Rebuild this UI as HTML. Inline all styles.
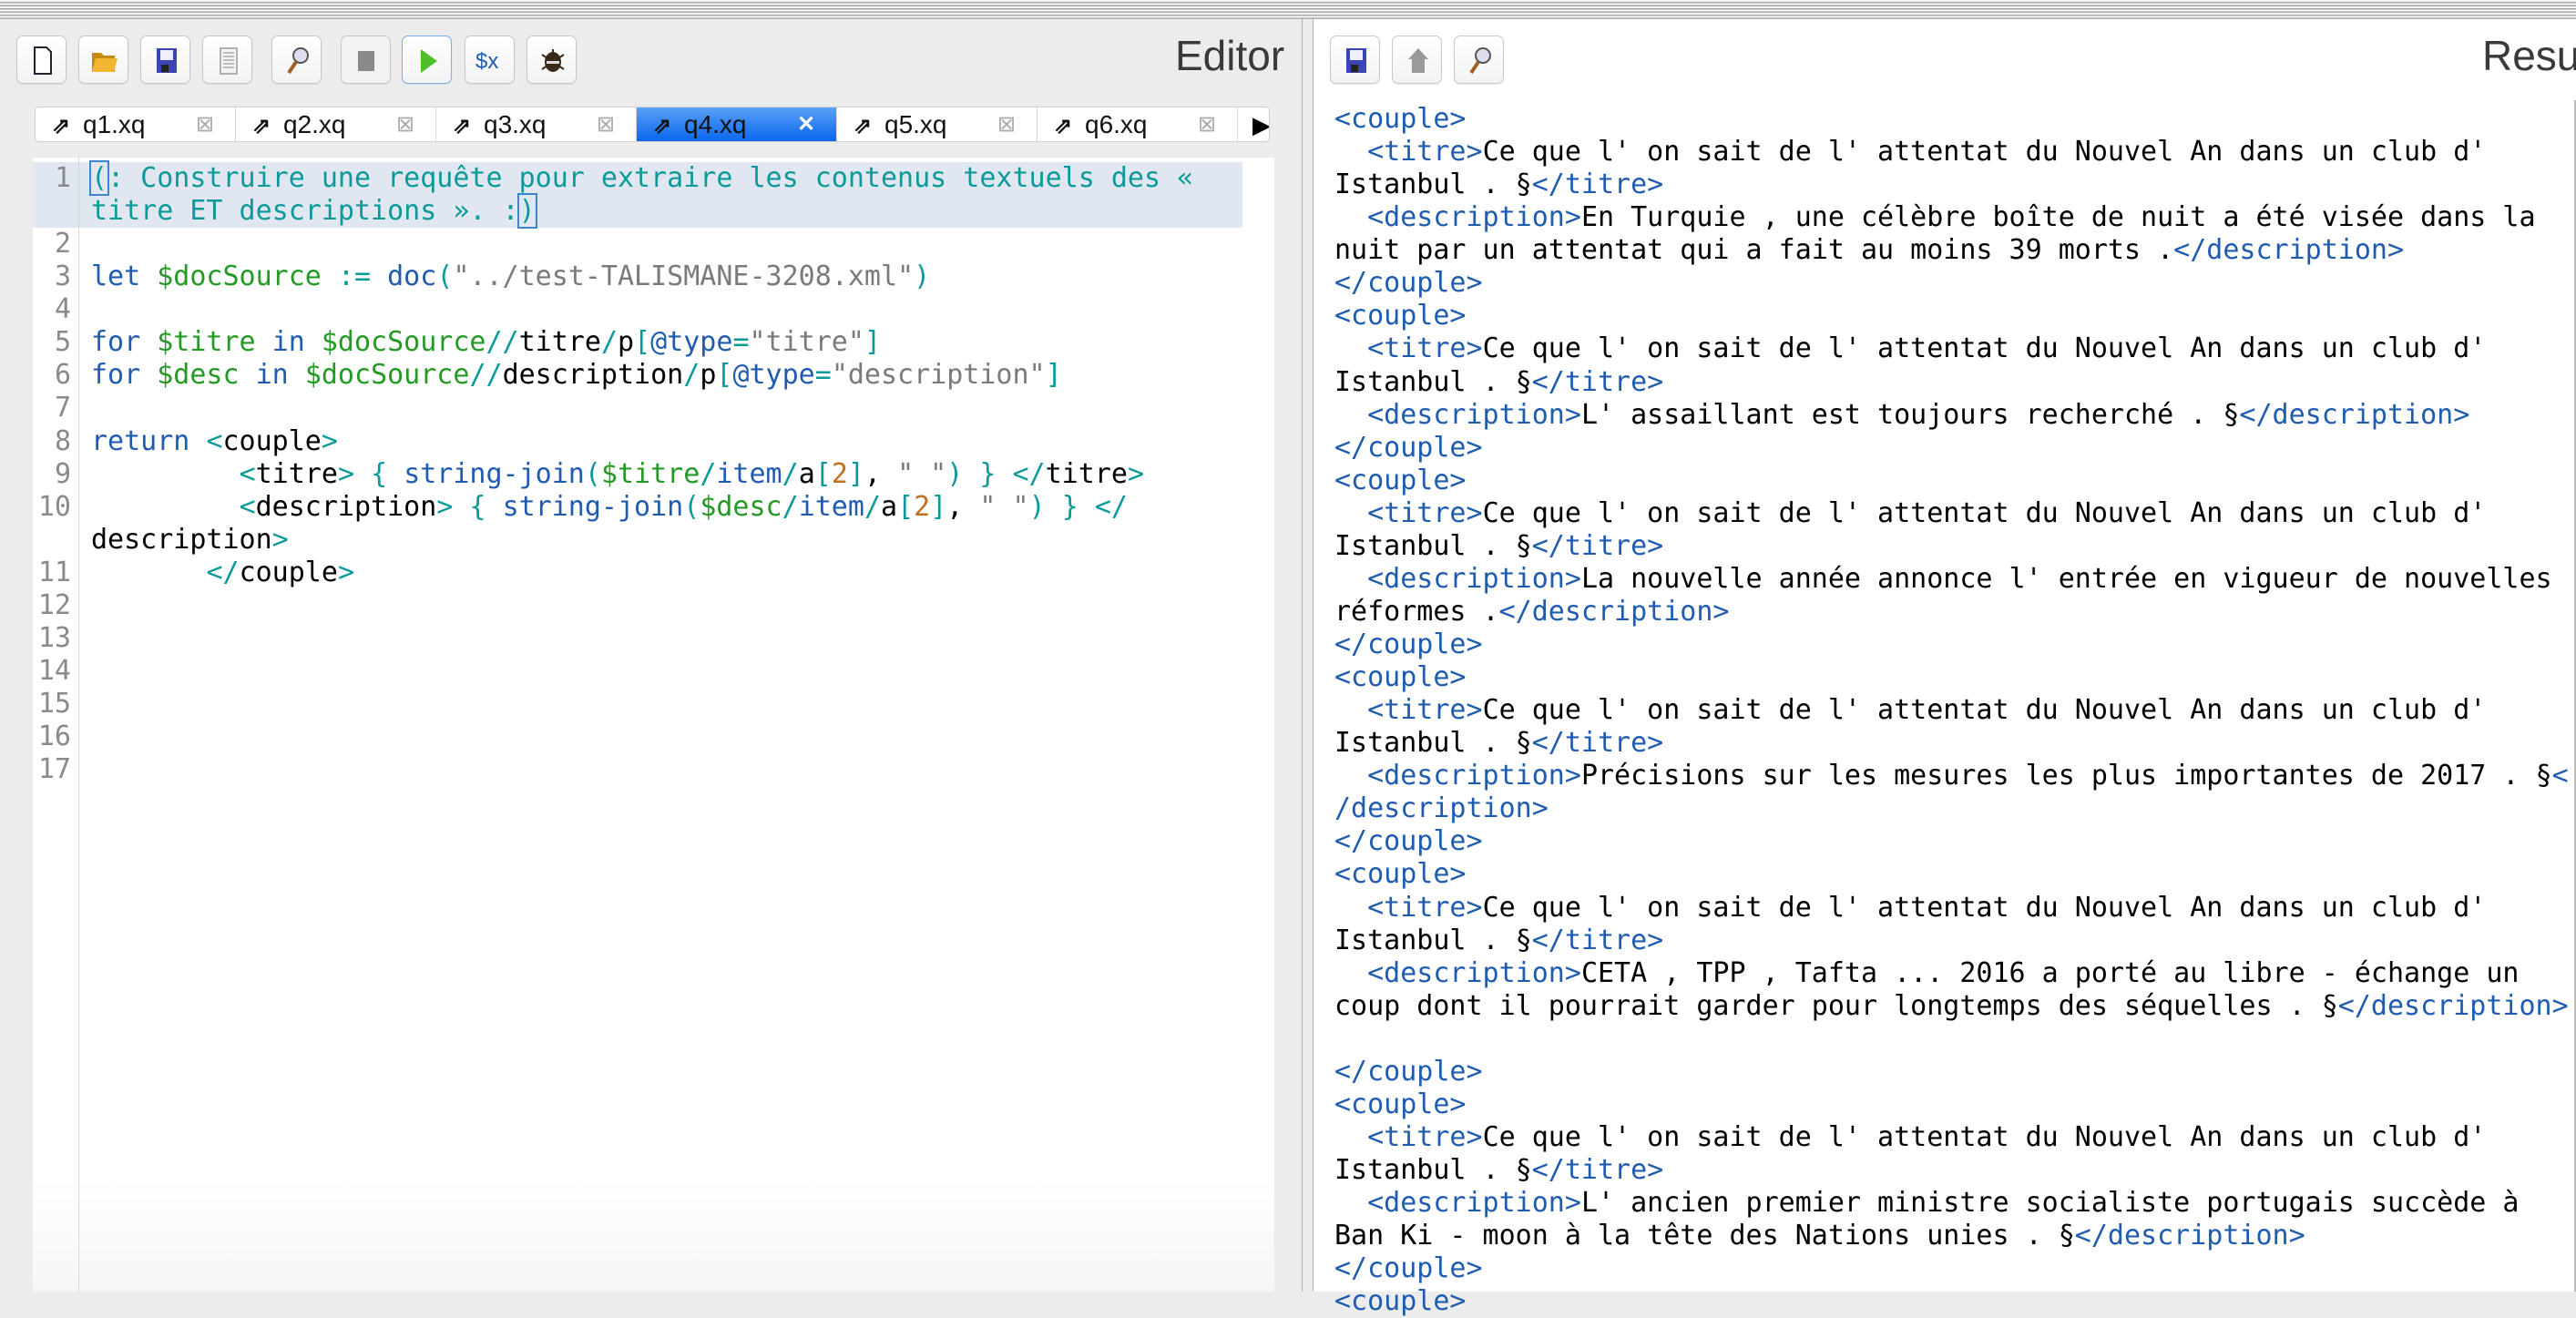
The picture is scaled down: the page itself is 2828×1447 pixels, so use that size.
<!DOCTYPE html>
<html><head><meta charset="utf-8"><style>
*{margin:0;padding:0;box-sizing:border-box}
body{width:2828px;height:1418px;overflow:hidden;background:#ececec;position:relative;font-family:"Liberation Sans",sans-serif}
.stripes{position:absolute;left:0;top:0;width:2828px;height:21px;background:repeating-linear-gradient(to bottom,#f4f4f4 0,#f4f4f4 2px,#a9a9a9 2px,#a9a9a9 3.5px)}
.btn{position:absolute;top:39px;width:55px;height:53px;border:1px solid #c8c8c8;border-radius:7px;background:linear-gradient(#fff,#f3f3f3);box-shadow:0 1px 1px rgba(0,0,0,.08)}
.btn svg{position:absolute;left:0;top:0}
.lbl{position:absolute;top:34px;font-size:46px;color:#3a3a3a}
.tabs{position:absolute;left:38px;top:117px;width:1356px;height:39px;background:#fff;border:1px solid #cfcfcf;border-radius:5px;display:flex;overflow:hidden}
.tab{width:220px;height:100%;border-right:1px solid #d8d8d8;position:relative;font-size:28px;color:#111}
.tab span.n{position:absolute;left:52px;top:3px}
.tab .ic{position:absolute;left:18px;top:6px;font-size:24px;font-weight:bold}
.tab .x{position:absolute;left:176px;top:4px;font-size:24px;color:#aaa}
.tab.on{background:linear-gradient(#5aa0f5,#0a66f0);color:#111}
.tab.on .x{color:#fff;font-weight:bold}
.editor{position:absolute;left:36px;top:173px;width:1363px;height:1245px;background:linear-gradient(#fff 90%,#f6f6f6)}
.gut{position:absolute;left:86px;top:173px;width:1px;height:1245px;background:#d6d6d6}
.hl{position:absolute;left:36px;top:178px;width:1328px;height:72px;background:#e1e7f0}
pre{font-family:"DejaVu Sans Mono",monospace;font-size:30px;line-height:36.07px;position:absolute;white-space:pre}
.nums{left:36px;top:178px;width:42px;text-align:right;color:#8a8a8a}
.code{left:100px;top:178px;color:#000}
.k{color:#1f5cb0}.v{color:#239a23}.t{color:#0a9a9a}.s{color:#7a7a7a}.o{color:#c0701e}
.res{left:1465px;top:113px;color:#000;font-size:30px}
.g{color:#1f5cb0}
.cur{outline:2px solid #3a86d0}
</style></head><body>
<div class="stripes"></div>
<div style="position:absolute;left:1429px;top:21px;width:1px;height:1397px;background:#b0b0b0"></div>
<div style="position:absolute;left:1441px;top:21px;width:1px;height:1397px;background:#b0b0b0"></div>
<div style="position:absolute;left:1442px;top:21px;width:1386px;height:1397px;background:#fff"></div>
<div style="position:absolute;left:2826px;top:110px;width:2px;height:1308px;background:#bbb"></div>

<div class="btn" style="left:18px"><svg width="55" height="53"><path d="M19 12h13l5 5v24H19z" fill="#fff" stroke="#223" stroke-width="2"/></svg></div>
<div class="btn" style="left:86px"><svg width="55" height="53"><path d="M14 18h10l3 3h12v18H14z" fill="#c98a12"/><path d="M18 24h24l-4 15H14z" fill="#f2b632"/></svg></div>
<div class="btn" style="left:154px"><svg width="55" height="53"><rect x="17" y="13" width="22" height="27" fill="#3c45b4"/><rect x="21" y="15" width="14" height="11" fill="#eef"/><rect x="22" y="31" width="8" height="8" fill="#222"/></svg></div>
<div class="btn" style="left:222px"><svg width="55" height="53"><rect x="19" y="13" width="18" height="28" fill="#f4f4f4" stroke="#999" stroke-width="1.5"/><path d="M22 18h12M22 22h12M22 26h12M22 30h12M22 34h12" stroke="#aaa" stroke-width="1.5"/></svg></div>
<div class="btn" style="left:298px"><svg width="55" height="53"><circle cx="31" cy="21" r="8" fill="#dde" stroke="#555" stroke-width="2"/><path d="M26 28l-8 12" stroke="#a0602a" stroke-width="4"/></svg></div>
<div class="btn" style="left:374px;background:#f2f2f2"><svg width="55" height="53"><rect x="18" y="16" width="18" height="22" fill="#8a8a8a"/></svg></div>
<div class="btn" style="left:441px;border-color:#7ab0e8"><svg width="55" height="53"><path d="M20 14l18 13-18 13z" fill="#4cbf2a"/></svg></div>
<div class="btn" style="left:510px"><svg width="55" height="53"><text x="11" y="35" font-family="Liberation Sans" font-size="24" fill="#1f5cb0">$x</text></svg></div>
<div class="btn" style="left:578px"><svg width="55" height="53"><ellipse cx="28" cy="28" rx="9" ry="11" fill="#3a2a1a"/><path d="M16 20l24 16M16 36l24-16M28 14v4" stroke="#3a2a1a" stroke-width="2"/><rect x="21" y="27" width="14" height="3" fill="#ddd"/></svg></div>
<div class="lbl" style="left:1290px">Editor</div>

<div class="tabs">
<div class="tab"><span class="ic">⇗</span><span class="n">q1.xq</span><span class="x">⊠</span></div>
<div class="tab"><span class="ic">⇗</span><span class="n">q2.xq</span><span class="x">⊠</span></div>
<div class="tab"><span class="ic">⇗</span><span class="n">q3.xq</span><span class="x">⊠</span></div>
<div class="tab on"><span class="ic">⇗</span><span class="n">q4.xq</span><span class="x">✕</span></div>
<div class="tab"><span class="ic">⇗</span><span class="n">q5.xq</span><span class="x">⊠</span></div>
<div class="tab"><span class="ic">⇗</span><span class="n">q6.xq</span><span class="x">⊠</span></div>
<div style="flex:1;position:relative;font-size:26px"><span style="position:absolute;left:16px;top:4px">▶</span></div>
</div>

<div class="editor"></div>
<div class="hl"></div>
<div class="gut"></div>
<pre class="nums">1

2
3
4
5
6
7
8
9
10

11
12
13
14
15
16
17</pre>
<pre class="code"><span class="t"><span class="cur">(</span>: Construire une requête pour extraire les contenus textuels des «
titre ET descriptions ». :<span class="cur">)</span></span>

<span class="k">let</span> <span class="v">$docSource</span> <span class="t">:=</span> <span class="k">doc</span><span class="t">(</span><span class="s">"../test-TALISMANE-3208.xml"</span><span class="t">)</span>

<span class="k">for</span> <span class="v">$titre</span> <span class="k">in</span> <span class="v">$docSource</span><span class="t">//</span>titre<span class="t">/</span>p<span class="t">[</span><span class="k">@type</span><span class="t">=</span><span class="s">"titre"</span><span class="t">]</span>
<span class="k">for</span> <span class="v">$desc</span> <span class="k">in</span> <span class="v">$docSource</span><span class="t">//</span>description<span class="t">/</span>p<span class="t">[</span><span class="k">@type</span><span class="t">=</span><span class="s">"description"</span><span class="t">]</span>

<span class="k">return</span> <span class="t">&lt;</span>couple<span class="t">&gt;</span>
         <span class="t">&lt;</span>titre<span class="t">&gt;</span> <span class="t">{</span> <span class="k">string-join</span><span class="t">(</span><span class="v">$titre</span><span class="t">/</span><span class="k">item</span><span class="t">/</span>a<span class="t">[</span><span class="o">2</span><span class="t">]</span>, <span class="s">" "</span><span class="t">)</span> <span class="t">}</span> <span class="t">&lt;/</span>titre<span class="t">&gt;</span>
         <span class="t">&lt;</span>description<span class="t">&gt;</span> <span class="t">{</span> <span class="k">string-join</span><span class="t">(</span><span class="v">$desc</span><span class="t">/</span><span class="k">item</span><span class="t">/</span>a<span class="t">[</span><span class="o">2</span><span class="t">]</span>, <span class="s">" "</span><span class="t">)</span> <span class="t">}</span> <span class="t">&lt;/</span>
description<span class="t">&gt;</span>
       <span class="t">&lt;/</span>couple<span class="t">&gt;</span></pre>

<div class="btn" style="left:1460px"><svg width="55" height="53"><rect x="17" y="13" width="22" height="27" fill="#3c45b4"/><rect x="21" y="15" width="14" height="11" fill="#eef"/><rect x="22" y="31" width="8" height="8" fill="#222"/></svg></div>
<div class="btn" style="left:1528px"><svg width="55" height="53"><path d="M28 13l11 12h-4v15H21V25h-4z" fill="#9a9a9a"/></svg></div>
<div class="btn" style="left:1596px"><svg width="55" height="53"><circle cx="31" cy="21" r="8" fill="#dde" stroke="#555" stroke-width="2"/><path d="M26 28l-8 12" stroke="#a0602a" stroke-width="4"/></svg></div>
<div class="lbl" style="left:2725px">Resu</div>

<pre class="res"><span class="g">&lt;couple&gt;</span>
  <span class="g">&lt;titre&gt;</span>Ce que l' on sait de l' attentat du Nouvel An dans un club d'
Istanbul . §<span class="g">&lt;/titre&gt;</span>
  <span class="g">&lt;description&gt;</span>En Turquie , une célèbre boîte de nuit a été visée dans la
nuit par un attentat qui a fait au moins 39 morts .<span class="g">&lt;/description&gt;</span>
<span class="g">&lt;/couple&gt;</span>
<span class="g">&lt;couple&gt;</span>
  <span class="g">&lt;titre&gt;</span>Ce que l' on sait de l' attentat du Nouvel An dans un club d'
Istanbul . §<span class="g">&lt;/titre&gt;</span>
  <span class="g">&lt;description&gt;</span>L' assaillant est toujours recherché . §<span class="g">&lt;/description&gt;</span>
<span class="g">&lt;/couple&gt;</span>
<span class="g">&lt;couple&gt;</span>
  <span class="g">&lt;titre&gt;</span>Ce que l' on sait de l' attentat du Nouvel An dans un club d'
Istanbul . §<span class="g">&lt;/titre&gt;</span>
  <span class="g">&lt;description&gt;</span>La nouvelle année annonce l' entrée en vigueur de nouvelles
réformes .<span class="g">&lt;/description&gt;</span>
<span class="g">&lt;/couple&gt;</span>
<span class="g">&lt;couple&gt;</span>
  <span class="g">&lt;titre&gt;</span>Ce que l' on sait de l' attentat du Nouvel An dans un club d'
Istanbul . §<span class="g">&lt;/titre&gt;</span>
  <span class="g">&lt;description&gt;</span>Précisions sur les mesures les plus importantes de 2017 . §<span class="g">&lt;</span>
<span class="g">/description&gt;</span>
<span class="g">&lt;/couple&gt;</span>
<span class="g">&lt;couple&gt;</span>
  <span class="g">&lt;titre&gt;</span>Ce que l' on sait de l' attentat du Nouvel An dans un club d'
Istanbul . §<span class="g">&lt;/titre&gt;</span>
  <span class="g">&lt;description&gt;</span>CETA , TPP , Tafta ... 2016 a porté au libre - échange un
coup dont il pourrait garder pour longtemps des séquelles . §<span class="g">&lt;/description&gt;</span>

<span class="g">&lt;/couple&gt;</span>
<span class="g">&lt;couple&gt;</span>
  <span class="g">&lt;titre&gt;</span>Ce que l' on sait de l' attentat du Nouvel An dans un club d'
Istanbul . §<span class="g">&lt;/titre&gt;</span>
  <span class="g">&lt;description&gt;</span>L' ancien premier ministre socialiste portugais succède à
Ban Ki - moon à la tête des Nations unies . §<span class="g">&lt;/description&gt;</span>
<span class="g">&lt;/couple&gt;</span>
<span class="g">&lt;couple&gt;</span></pre>
</body></html>
